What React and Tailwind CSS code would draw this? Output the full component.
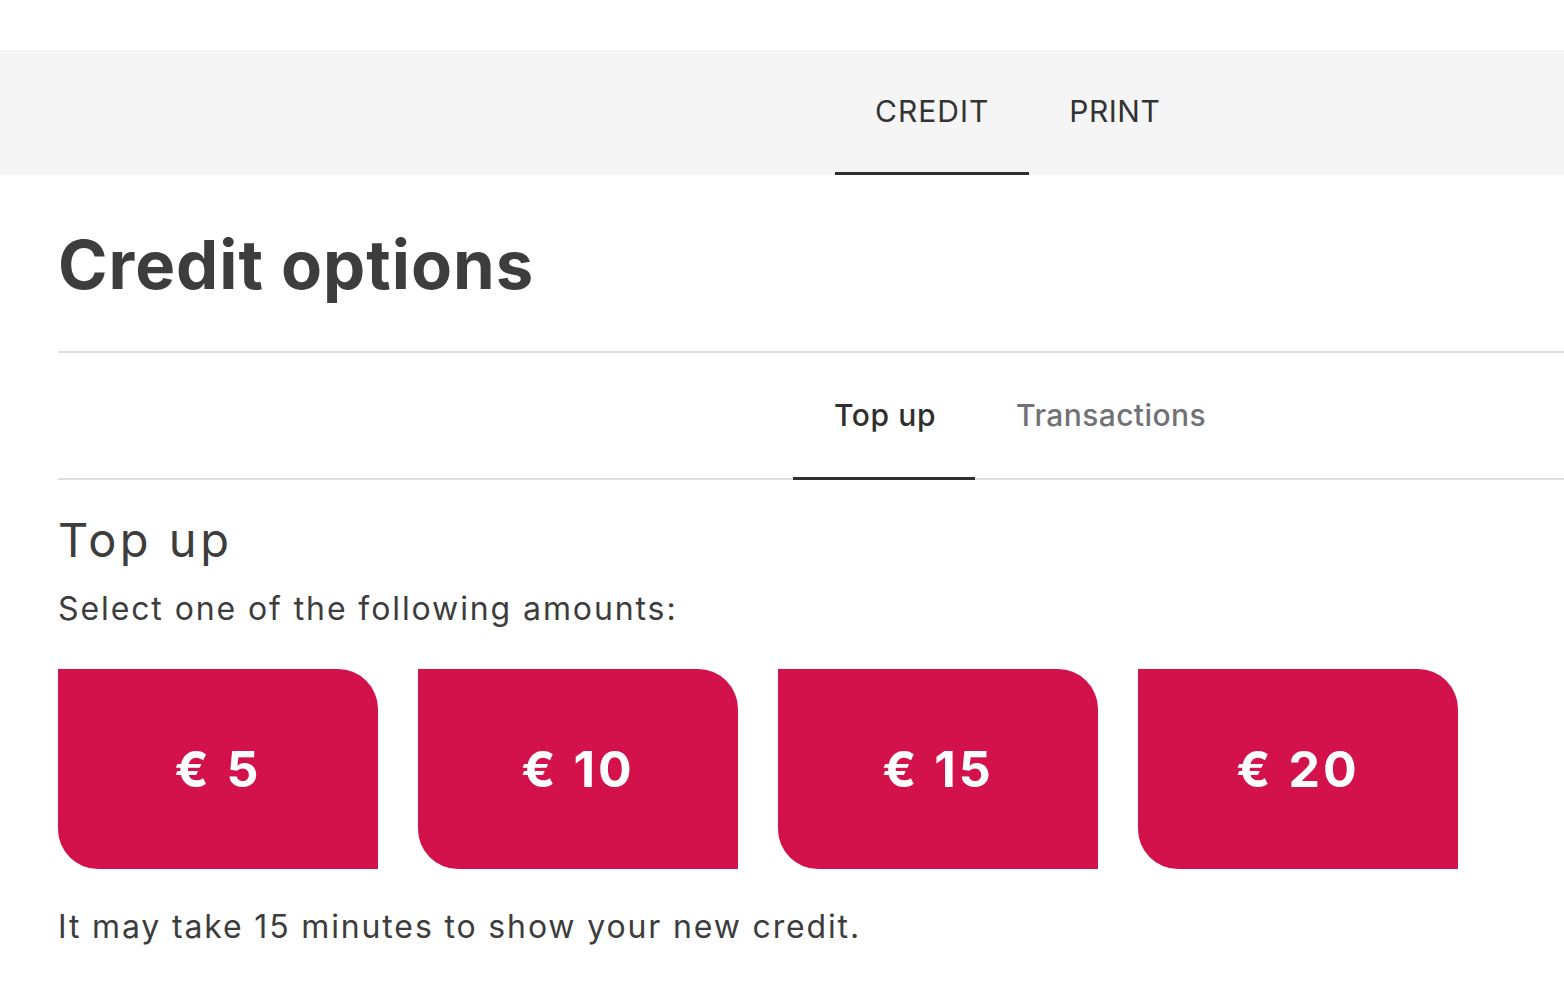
const amounts = [5, 10, 15, 20]

const App = () => {
    const font = { fontFamily: '"Inter", "Open Sans", sans-serif' }

    return (
        <div className="min-h-screen bg-white text-[#3d3d3d]" style={font}>
            <div className="h-[50px]" />

            {/* top navigation */}
            <nav className="flex h-[125px] bg-[#f5f5f5] pl-[835px]">
                <a className="flex items-center border-b-[3px] border-[#2f2f2f] px-[40px] text-[30px] tracking-[1px] text-[#333]">
                    CREDIT
                </a>
                <a className="flex items-center border-b-[3px] border-transparent px-[40px] text-[30px] tracking-[0.5px] text-[#333]">
                    PRINT
                </a>
            </nav>

            <main className="pl-[58px]">
                <div className="flex h-[176px] items-center pt-[2px]">
                    <h1 className="text-[67px] font-bold leading-none tracking-[1px] text-[#3d3d3d]">Credit options</h1>
                </div>

                <div className="flex h-[129px] border-y-2 border-[#dedede] pl-[735px]">
                    <button className="-mb-[2px] flex items-center border-b-[3px] border-[#2f2f2f] pl-[41px] pr-[39px] text-[30px] font-medium tracking-[0.6px] text-[#2f2f2f]">
                        Top up
                    </button>
                    <button className="flex items-center px-[41px] text-[30px] font-medium tracking-[0.4px] text-[#707275]">
                        Transactions
                    </button>
                </div>

                <h2 className="mt-[30px] text-[47px] leading-[60px] tracking-[3.5px] text-[#3d3d3d]">Top up</h2>
                <p className="mt-[19px] text-[32px] leading-[40px] tracking-[1.9px] text-[#3d3d3d]">Select one of the following amounts:</p>

                <div className="mt-[40px] flex gap-[40px]">
                    {amounts.map(a => (
                        <button
                            key={a}
                            className="flex h-[200px] w-[320px] items-center justify-center rounded-tr-[40px] rounded-bl-[40px] bg-[#d3124c] text-[50px] font-bold tracking-[3px] text-white"
                        >
                            € {a}
                        </button>
                    ))}
                </div>

                <p className="mt-[38px] text-[32px] leading-[40px] tracking-[1.85px] text-[#3d3d3d]">It may take 15 minutes to show your new credit.</p>
            </main>
        </div>
    )
}
export default App
